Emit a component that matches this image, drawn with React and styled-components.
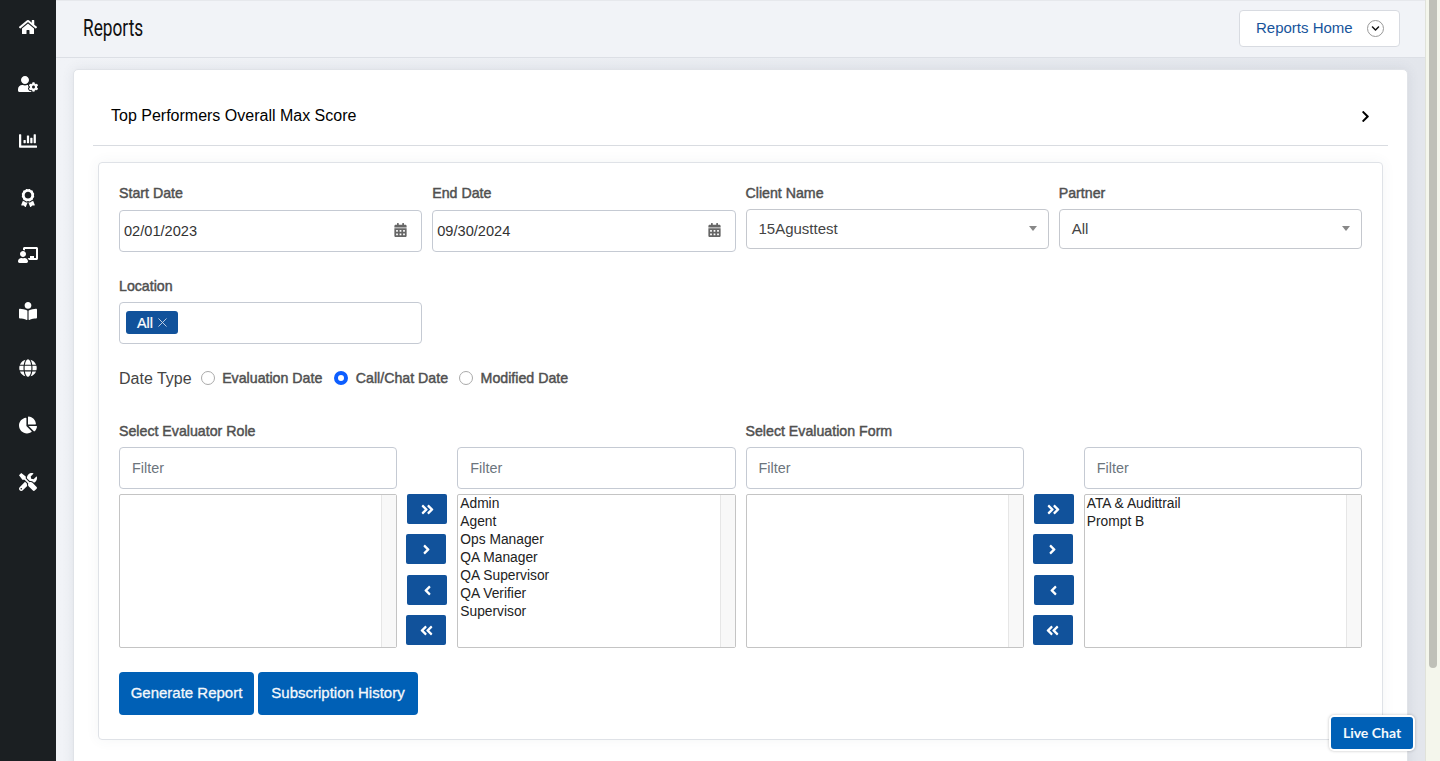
import styled, { createGlobalStyle } from 'styled-components';
import { X } from 'lucide-react';
import {
  FaHome, FaUserCog, FaChartBar, FaAward, FaChalkboardTeacher, FaBookReader, FaGlobe,
  FaChartPie, FaTools, FaCalendarAlt, FaChevronRight, FaChevronDown,
  FaAngleRight, FaAngleLeft, FaAngleDoubleRight, FaAngleDoubleLeft,
} from 'react-icons/fa';

const GlobalStyle = createGlobalStyle`
  * { box-sizing: border-box; }
  html, body { margin: 0; padding: 0; height: 761px; overflow: hidden; }
  body { font-family: "Liberation Sans", Arial, sans-serif; color: #333; background: #f1f3f7; }
`;

const Page = styled.div`
  position: relative;
  display: flex;
  width: 1440px;
  height: 761px;
  overflow: hidden;
`;

const Sidebar = styled.nav`
  flex: 0 0 56px;
  display: flex;
  flex-direction: column;
  margin-top: -1px;
  background: #1b1f22;
`;

const NavItem = styled.a`
  height: 56.8px;
  flex: none;
  display: flex;
  align-items: center;
  justify-content: center;
  color: #fff;
  svg { height: ${(p) => p.$h || 18}px; width: auto; }
`;

const Main = styled.main`
  flex: 1;
  min-width: 0;
  display: flex;
  flex-direction: column;
`;

const TopBar = styled.header`
  flex: 0 0 58px;
  display: flex;
  align-items: center;
  justify-content: space-between;
  padding: 0 25px 1px 27px;
  background: #f1f3f7;
  border-top: 1px solid #e6e8ec;
  border-bottom: 1px solid #dcdfe5;
`;

const PageTitle = styled.h1`
  margin: -2px 0 0;
  font-family: Roboto, sans-serif;
  font-size: 24px;
  font-weight: 400;
  color: #111;
  transform: scaleX(0.72);
  transform-origin: left center;
`;

const HomeButton = styled.button`
  width: 161px;
  height: 37px;
  display: flex;
  align-items: center;
  justify-content: space-between;
  padding: 0 15px 2px 16px;
  background: #fff;
  border: 1px solid #d8dbe1;
  border-radius: 4px;
  font: 15px "Liberation Sans", Arial, sans-serif;
  color: #17549b;
`;

const RoundChevron = styled.span`
  width: 17px;
  height: 17px;
  display: flex;
  align-items: center;
  justify-content: center;
  margin-top: 2px;
  border: 1px solid #999;
  border-radius: 50%;
  color: #111;
  svg { width: 9px; height: 9px; }
`;

const Content = styled.div`
  flex: 1;
  padding: 11px 17px 0;
  background: linear-gradient(90deg, #f1f3f7, #e3e6ec);
`;

const Card = styled.section`
  min-height: 720px;
  padding: 0 19px;
  background: #fff;
  border: 1px solid #e0e3e8;
  border-radius: 5px;
  box-shadow: 0 0 12px rgba(70, 80, 100, 0.1);
`;

const Accordion = styled.div`
  height: 76px;
  display: flex;
  align-items: center;
  justify-content: space-between;
  padding: 32px 16px 15px 18px;
  border-bottom: 1px solid #d9dce1;
  font-size: 16px;
  color: #000;
  svg { width: 13px; height: 13px; }
`;

const Panel = styled.div`
  margin: 16px 5px 0;
  padding: 22px 20px 24px;
  border: 1px solid #dfe2e7;
  border-radius: 4px;
  box-shadow: 0 0 14px rgba(70, 80, 100, 0.06);
`;

const FieldGrid = styled.div`
  display: grid;
  grid-template-columns: repeat(4, 1fr);
  column-gap: 10px;
  margin-bottom: ${(p) => p.$after || 0}px;
`;

const Field = styled.div`
  min-width: 0;
`;

const Label = styled.label`
  display: block;
  height: 17px;
  margin-bottom: ${(p) => p.$gap || 7}px;
  font-size: 14.2px;
  line-height: 17px;
  color: #505050;
  -webkit-text-stroke: 0.45px #505050;
`;

const InputBox = styled.div`
  position: relative;
  height: 42px;
  border: 1px solid #c5cad3;
  border-radius: 4px;
  background: #fff;
`;

const DateInput = styled.input`
  width: 100%;
  height: 100%;
  padding: 0 30px 0 4px;
  border: 0;
  background: transparent;
  font: 14.6px "Liberation Sans", Arial, sans-serif;
  color: #333;
  outline: none;
`;

const CalendarIcon = styled.span`
  position: absolute;
  top: 12px;
  right: 14px;
  color: #666;
  svg { width: 13px; height: 14px; display: block; }
`;

const SelectBox = styled.div`
  height: 40px;
  margin-top: -1px;
  display: flex;
  align-items: center;
  justify-content: space-between;
  padding: 0 12px 1px;
  border: 1px solid #c5c8ce;
  border-radius: 4px;
  font-size: 15px;
  color: #444;
`;

const Caret = styled.span`
  width: 0;
  height: 0;
  margin-right: -1px;
  border-left: 4px solid transparent;
  border-right: 4px solid transparent;
  border-top: 5px solid #888;
`;

const TagBox = styled(InputBox)`
  display: flex;
  align-items: flex-start;
  padding: 8px 6px;
`;

const Tag = styled.span`
  height: 23px;
  width: 52px;
  display: flex;
  align-items: center;
  gap: 2px;
  padding-left: 11px;
  background: #11529b;
  border-radius: 3px;
  font-size: 14.4px;
  color: #fff;
  -webkit-text-stroke: 0.2px #fff;
  svg { width: 15px; height: 15px; flex: none; color: #c6d4e6; -webkit-text-stroke: 0; }
`;

const DateTypeRow = styled.div`
  height: 20px;
  margin: 24px 0 35px;
  padding-top: 2px;
  display: flex;
  align-items: center;
  gap: 7px;
  font-size: 16px;
  color: #444;
`;

const RadioLabel = styled.span`
  display: flex;
  align-items: center;
  gap: 7.5px;
  margin: -2px 0 0 ${(p) => p.$left || 0}px;
  font-size: 14.2px;
  color: #505050;
  -webkit-text-stroke: 0.45px #505050;
`;

const RadioDot = styled.span`
  width: 14px;
  height: 14px;
  flex: none;
  border-radius: 50%;
  background: #fff;
  border: ${(p) => (p.$on ? '4px solid #0d5eff' : '1px solid #aaa')};
`;

const PickerGrid = styled.div`
  display: grid;
  grid-template-columns: repeat(2, 1fr);
  column-gap: 10px;
`;

const Picker = styled.div`
  display: grid;
  grid-template-columns: 1fr 60px 1fr;
  grid-template-rows: 42px 154px;
  row-gap: 5px;
`;

const FilterInput = styled.input`
  width: 100%;
  height: 42px;
  padding: 0 12px;
  border: 1px solid #c5cad3;
  border-radius: 4px;
  font: 14.4px "Liberation Sans", Arial, sans-serif;
  outline: none;
  &::placeholder { color: #6c757d; opacity: 1; }
`;

const ListBox = styled.div`
  display: flex;
  border: 1px solid #c4c4c4;
  border-radius: 2px;
  font-size: 13.8px;
  line-height: 18px;
  color: #222;
`;

const ListItems = styled.div`
  flex: 1;
  padding: 0 2px;
`;

const ListTrack = styled.div`
  flex: 0 0 15px;
  background: #f8f8f8;
  border-left: 1px solid #e6e6e6;
`;

const MoveButtons = styled.div`
  display: flex;
  flex-direction: column;
  grid-row: 2;
  grid-column: 2;
`;

const MoveButton = styled.button`
  flex: none;
  width: 40px;
  height: 30px;
  padding: 0;
  display: flex;
  align-items: center;
  justify-content: center;
  margin: 0 0 10px 9px;
  background: #11529b;
  border: 0;
  border-radius: 2px;
  color: #fff;
  &:nth-child(odd) { margin-left: 10px; }
  &:nth-child(2) { margin-bottom: 11px; }
  svg { width: 15px; height: 15px; }
`;

const ActionRow = styled.div`
  display: flex;
  gap: 4px;
  margin-top: 24px;
`;

const ActionButton = styled.button`
  width: ${(p) => p.$w}px;
  height: 43px;
  padding: 0 0 2px;
  background: #0060b6;
  border: 0;
  border-radius: 4px;
  font: 15px "Liberation Sans", Arial, sans-serif;
  color: #f4f8fc;
  -webkit-text-stroke: 0.3px #f4f8fc;
`;

const Scrollbar = styled.div`
  flex: 0 0 15px;
  padding: 0 3px;
  background: #f4f6ec;
  border-left: 1px solid #e0e2da;
`;

const ScrollThumb = styled.div`
  height: 668px;
  background: #bfc0b8;
  border-radius: 0 0 5px 5px;
`;

const LiveChat = styled.button`
  position: absolute;
  left: 1329px;
  top: 715px;
  width: 86px;
  height: 36px;
  padding: 0 0 2px;
  background: #0060b6;
  border: 2px solid #fff;
  border-radius: 5px;
  box-shadow: 0 0 3px rgba(0, 0, 0, 0.25);
  font: 700 14px Lato, sans-serif;
  color: #f4f8fc;
`;

const navIcons = [
  { Icon: FaHome },
  { Icon: FaUserCog, h: 20 },
  { Icon: FaChartBar },
  { Icon: FaAward },
  { Icon: FaChalkboardTeacher, h: 20 },
  { Icon: FaBookReader },
  { Icon: FaGlobe },
  { Icon: FaChartPie },
  { Icon: FaTools },
];
const moveIcons = [FaAngleDoubleRight, FaAngleRight, FaAngleLeft, FaAngleDoubleLeft];
const roles = ['Admin', 'Agent', 'Ops Manager', 'QA Manager', 'QA Supervisor', 'QA Verifier', 'Supervisor'];
const forms = ['ATA & Audittrail', 'Prompt B'];

function DateField({ label, value }) {
  return (
    <Field>
      <Label $gap={8}>{label}</Label>
      <InputBox>
        <DateInput defaultValue={value} />
        <CalendarIcon><FaCalendarAlt /></CalendarIcon>
      </InputBox>
    </Field>
  );
}

function SelectField({ label, value }) {
  return (
    <Field>
      <Label $gap={8}>{label}</Label>
      <SelectBox>{value}<Caret /></SelectBox>
    </Field>
  );
}

function DualList({ label, items }) {
  return (
    <div>
      <Label>{label}</Label>
      <Picker>
        <FilterInput placeholder="Filter" />
        <span />
        <FilterInput placeholder="Filter" />
        <ListBox><ListItems /><ListTrack /></ListBox>
        <MoveButtons>
          {moveIcons.map((Icon, i) => <MoveButton key={i}><Icon /></MoveButton>)}
        </MoveButtons>
        <ListBox>
          <ListItems>{items.map((t) => <div key={t}>{t}</div>)}</ListItems>
          <ListTrack />
        </ListBox>
      </Picker>
    </div>
  );
}

export default function App() {
  return (
    <Page>
      <GlobalStyle />
      <Sidebar>
        {navIcons.map(({ Icon, h }, i) => <NavItem key={i} $h={h}><Icon /></NavItem>)}
      </Sidebar>
      <Main>
        <TopBar>
          <PageTitle>Reports</PageTitle>
          <HomeButton>Reports Home<RoundChevron><FaChevronDown /></RoundChevron></HomeButton>
        </TopBar>
        <Content>
          <Card>
            <Accordion>Top Performers Overall Max Score<FaChevronRight /></Accordion>
            <Panel>
              <FieldGrid $after={26}>
                <DateField label="Start Date" value="02/01/2023" />
                <DateField label="End Date" value="09/30/2024" />
                <SelectField label="Client Name" value="15Agusttest" />
                <SelectField label="Partner" value="All" />
              </FieldGrid>
              <FieldGrid>
                <Field>
                  <Label>Location</Label>
                  <TagBox><Tag>All<X strokeWidth={1.5} /></Tag></TagBox>
                </Field>
              </FieldGrid>
              <DateTypeRow>
                Date Type
                <RadioLabel $left={2}><RadioDot />Evaluation Date</RadioLabel>
                <RadioLabel $left={5}><RadioDot $on />Call/Chat Date</RadioLabel>
                <RadioLabel $left={4}><RadioDot />Modified Date</RadioLabel>
              </DateTypeRow>
              <PickerGrid>
                <DualList label="Select Evaluator Role" items={roles} />
                <DualList label="Select Evaluation Form" items={forms} />
              </PickerGrid>
              <ActionRow>
                <ActionButton $w={135}>Generate Report</ActionButton>
                <ActionButton $w={160}>Subscription History</ActionButton>
              </ActionRow>
            </Panel>
          </Card>
        </Content>
      </Main>
      <Scrollbar><ScrollThumb /></Scrollbar>
      <LiveChat>Live Chat</LiveChat>
    </Page>
  );
}
